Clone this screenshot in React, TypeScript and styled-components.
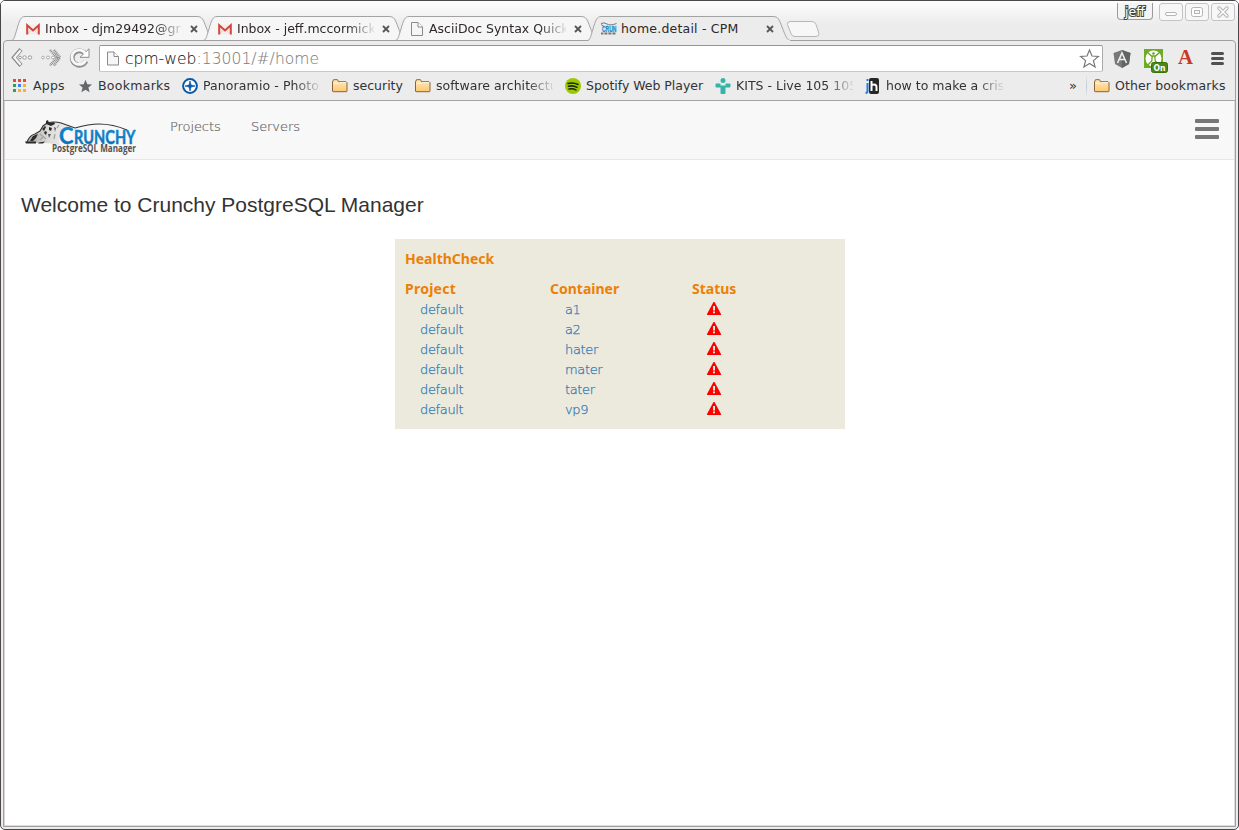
import React from "react";
import styled, { createGlobalStyle } from "styled-components";

const GlobalStyle = createGlobalStyle`
  * { box-sizing: border-box; }
  body { margin: 0; background: #fff; overflow: hidden; }
  svg { display: block; flex: none; overflow: visible; }
`;

const Window = styled.div`
  width: 1239px;
  height: 830px;
  display: flex;
  flex-direction: column;
  border: 1px solid #4a474a;
  border-radius: 5px;
  background: #ececec;
  padding: 0 2px 2px 2px;
  font-family: "DejaVu Sans", sans-serif;
  overflow: hidden;
`;

const TitleBar = styled.header`
  height: 39px;
  flex: none;
  margin: 0 -2px;
  padding: 0 1px 0 10px;
  display: flex;
  justify-content: space-between;
  background: linear-gradient(#fdfdfd, #ececec 60%);
`;

const TabStrip = styled.div`
  display: flex;
  align-items: flex-end;
`;

const TabBox = styled.div<{ $active?: boolean }>`
  position: relative;
  z-index: ${(p) => (p.$active ? 2 : 1)};
  width: 206px;
  height: 25px;
  margin: 0 -14px -1px 0;
  padding: 0 16px 0 14px;
  display: flex;
  align-items: center;
`;

const TabShape = styled.svg`
  position: absolute;
  left: 0;
  top: 0;
`;

const TabIcon = styled.span`
  position: relative;
  display: flex;
  align-items: center;
  width: 16px;
  height: 16px;
  margin: 1px 4px 0 0;
`;

const TabTitle = styled.span<{ $fade?: boolean; $spacing: number }>`
  position: relative;
  width: 137px;
  height: 18px;
  line-height: 18px;
  font-size: 12.5px;
  letter-spacing: ${(p) => p.$spacing}px;
  white-space: nowrap;
  overflow: hidden;
  color: #2e2828;
  mask-image: ${(p) => (p.$fade ? "linear-gradient(90deg,#000 110px,transparent 140px)" : "none")};
`;

const CloseIcon = styled.svg`
  position: relative;
  margin: 1px 0 0 8px;
`;

const NewTab = styled.svg`
  margin: 0 0 3px 7px;
`;

const Controls = styled.div`
  display: flex;
  padding-top: 2px;
`;

const UserBadge = styled.span`
  width: 36px;
  height: 17px;
  margin: 0 6px 0 0;
  border: 1px solid #9b9b9b;
  border-top: 0;
  border-radius: 0 0 4px 4px;
  background: #f4f4f4;
  color: #fff;
  -webkit-text-stroke: 2px #444;
  paint-order: stroke fill;
  font-size: 12.5px;
  line-height: 18px;
  text-align: center;
`;

const ControlButton = styled.span`
  width: 24px;
  height: 18px;
  margin-right: 2px;
  border: 1px solid #c3c3c3;
  border-radius: 3px;
  background: #f7f7f7;
  display: flex;
  align-items: center;
  justify-content: center;
`;

const Frame = styled.main`
  flex: 1;
  display: flex;
  flex-direction: column;
  border: 1px solid #a1a0a1;
  border-radius: 4px 4px 0 0;
  background: #ececec;
`;

const Toolbar = styled.div`
  height: 31px;
  flex: none;
  display: flex;
  align-items: center;
  padding: 3px 8px 0 7px;
`;

const NavIcons = styled.div`
  display: flex;
  width: 88px;
  gap: 7px;
`;

const AddressBar = styled.div`
  width: 1004px;
  height: 27px;
  border: 1px solid #aaa;
  border-top-color: #949494;
  border-bottom-color: #c9c9c9;
  border-radius: 2px;
  background: #fff;
  display: flex;
  align-items: center;
  padding: 0 3px 0 7px;
`;

const Url = styled.span`
  flex: 1;
  margin: 2px 0 0 6px;
  font-size: 15.5px;
  font-weight: 200;
  letter-spacing: 0.05px;
  color: #828282;
  white-space: nowrap;
  line-height: 20px;
  -webkit-text-stroke: 0.1px currentColor;
`;

const Host = styled.span`
  color: #202020;
`;

const Extensions = styled.div`
  display: flex;
  align-items: center;
  width: 112px;
  margin-left: 10px;
`;

const ExtensionSlot = styled.span<{ $width: number }>`
  width: ${(p) => p.$width}px;
`;

const BookmarksBar = styled.div`
  height: 29px;
  flex: none;
  display: flex;
  align-items: center;
  padding: 0 9px 1px 8px;
  border-bottom: 1px solid #a5a5a5;
`;

const Bookmark = styled.span`
  display: flex;
  align-items: center;
  gap: 5px;
  margin-right: 12px;
`;

const BookmarkText = styled.span<{ $width: number; $fade?: boolean; $spacing?: number }>`
  width: ${(p) => p.$width}px;
  height: 18px;
  line-height: 17px;
  font-size: 12.5px;
  letter-spacing: ${(p) => p.$spacing ?? 0}px;
  color: #303335;
  white-space: nowrap;
  overflow: ${(p) => (p.$fade ? "hidden" : "visible")};
  mask-image: ${(p) => (p.$fade ? "linear-gradient(90deg,#000 78%,transparent 102%)" : "none")};
`;

const Chevron = styled.span`
  margin-left: auto;
  width: 17px;
  font-size: 13px;
  line-height: 16px;
  color: #303335;
`;

const Separator = styled.i`
  width: 1px;
  height: 24px;
  margin-right: 7px;
  background: linear-gradient(#ececec, #bfcbd6, #ececec);
`;

const OtherBookmarks = styled(Bookmark)`
  margin-right: 0;
`;

const Page = styled.section`
  flex: 1;
  background: #fff;
  border: solid #dcdcdc;
  border-width: 0 1px 1px;
  border-left-color: #d8d2d2;
  font-family: "Liberation Sans", sans-serif;
`;

const PageNav = styled.nav`
  height: 59px;
  display: flex;
  align-items: flex-start;
  padding: 18px 15px 0 20px;
  background: #f8f8f8;
  border-bottom: 1px solid #e7e7e7;
`;

const NavLinks = styled.div`
  flex: 1;
  display: flex;
  margin-left: 33px;
`;

const NavLink = styled.span<{ $width: number }>`
  width: ${(p) => p.$width}px;
  font-family: "DejaVu Sans", sans-serif;
  font-weight: 200;
  font-size: 13px;
  line-height: 15px;
  letter-spacing: -0.08px;
  color: #666;
  -webkit-text-stroke: 0.2px currentColor;
`;

const Welcome = styled.h1`
  margin: 31px 0 0 16px;
  font-size: 21px;
  font-weight: 400;
  line-height: 28px;
  color: #333;
`;

const HealthPanel = styled.div`
  width: 450px;
  height: 190px;
  margin: 20px 0 0 390px;
  padding: 10px;
  background: #eceadd;
`;

const PanelTitle = styled.h2`
  margin: 0 0 10px;
  font: 700 14px/20px "Noto Sans", sans-serif;
  color: #ec8006;
`;

const HealthGrid = styled.div`
  display: grid;
  grid-template-columns: 145px 142px 1fr;
  grid-auto-rows: 20px;
`;

const ColumnTitle = styled.span<{ $spacing?: number }>`
  font: 700 14px/20px "Noto Sans", sans-serif;
  letter-spacing: ${(p) => p.$spacing ?? 0}px;
  color: #ec8006;
`;

const Cell = styled.span`
  padding: 1px 0 0 15px;
  font: 200 13px/20px "DejaVu Sans", sans-serif;
  letter-spacing: -0.35px;
  color: #337ab7;
  -webkit-text-stroke: 0.25px currentColor;
`;

const StatusCell = styled.span`
  padding: 3px 0 0 15px;
`;

function Gmail() {
  return (
    <svg width="15" height="16" viewBox="-0.500 0 15 16">
      <rect x="1" y="3.500" width="13" height="10" fill="#f2eeee" />
      <path d="M2 12.500L7.500 7.500l5 5" stroke="#d5cfcf" fill="none" />
      <path d="M1.700 13.500V4.300L7.500 9.500l5.800-5.200V13.500" stroke="#d4453a" strokeWidth="2" fill="none" />
    </svg>
  );
}

function PageGlyph({ w = 12, h = 14 }: { w?: number; h?: number }) {
  return (
    <svg width={w} height={h} viewBox="0 0 12 14">
      <path d="M.5.5h6.500L11.500 5v8.500H.5z" fill="#f6f6f6" stroke="#8a8a8a" />
      <path d="M7 .5V5h4.500" fill="#fff" stroke="#8a8a8a" />
    </svg>
  );
}

function Favicon() {
  return (
    <svg width="16" height="14" viewBox="0 0 16 14">
      <path d="M0 1.500Q3 0 6 2T15.500 1.500M0 2.500l3 2" stroke="#777" fill="none" />
      <text x="1" y="9.500" fontFamily="Liberation Sans" fontWeight="700" fontSize="9" textLength="14.500" lengthAdjust="spacingAndGlyphs" fill="#198dcc" stroke="#198dcc" strokeWidth=".3">CRUN</text>
      <path d="M0 11.500h15" stroke="#777" strokeWidth="1.800" strokeDasharray="2 .6 1 .4" />
    </svg>
  );
}

function Folder() {
  return (
    <svg width="16" height="16" viewBox="0 0 16 16">
      <defs>
        <linearGradient id="folder" x2="0" y2="1">
          <stop stopColor="#ffecc0" />
          <stop offset="1" stopColor="#fcc871" />
        </linearGradient>
      </defs>
      <path d="M.5 13V4l1-2.300h4l1 2h7.500l1 1V13q0 .7-.7.700H1.200Q.5 13.700.5 13z" fill="url(#folder)" stroke="#8c6238" />
      <path d="M1.500 5.500h5l1-1H14" stroke="#fff3d6" fill="none" />
    </svg>
  );
}

function Logo() {
  return (
    <svg width="112" height="37" viewBox="0 0 112 37">
      <defs>
        <linearGradient id="hide" x2="1">
          <stop stopColor="#a9a6a4" />
          <stop offset=".45" stopColor="#dddcdb" />
          <stop offset="1" stopColor="#f8f8f8" />
        </linearGradient>
        <linearGradient id="logoBlue" x2="0" y2="1">
          <stop stopColor="#1390d4" />
          <stop offset="1" stopColor="#0869b2" />
        </linearGradient>
      </defs>
      <path d="M2 23l5-6 8-4 3-6 4-3 5 0 8-1 9 2 7 4-9 2-6 5-2 5 2 6-7-2-8-1H4z" fill="url(#hide)" />
      <path d="M2 23q3-7 8-8l5-3 3-5 4-3q7-2 14 0l14 5q14-4 24-4 14 0 28 6" fill="none" stroke="#343230" strokeWidth="1.100" />
      <path d="M21 5V2l2-1 1 3 5-1 1 2-4 2zM17 10l3-3 1 1-2 4zM8 17l5-2-2 4-3 3H5zM20 12l2 1-1 3-2-2zM24 8l3 1-1 3-2-1zM0 22.500h11v2H1zM14 23.500l6-1-2 2h-5z" fill="#2c2a29" />
      <path d="M23 15l3 0-2 4zM29 8l2 1-1 4z" fill="#5a5856" />
      <path d="M15 15l6 5M30 15l-1 5M34 6l-2 3M18 18l-3 3" stroke="#a5a3a1" strokeWidth="1.300" />
      <g fontFamily="Lato, sans-serif" fontWeight="700" fill="url(#logoBlue)">
        <text x="34" y="25" fontSize="22" stroke="#1280c7" strokeWidth=".4" textLength="14.500" lengthAdjust="spacingAndGlyphs">C</text>
        <text x="49" y="25" fontSize="18" stroke="#1280c7" strokeWidth=".5" textLength="61.500" lengthAdjust="spacingAndGlyphs">RUNCHY</text>
      </g>
      <text x="27" y="32.500" fontFamily="Open Sans, sans-serif" fontSize="10" fontWeight="700" fill="#56524f" textLength="84" lengthAdjust="spacingAndGlyphs">PostgreSQL Manager</text>
    </svg>
  );
}

function Tab({ title, icon, active, fade = true, spacing = 0 }: { title: string; icon: React.ReactNode; active?: boolean; fade?: boolean; spacing?: number }) {
  return (
    <TabBox $active={active}>
      <TabShape width="206" height="26">
        <path
          d="M0 24.500C3 24.500 3.500 21 6 13C8.500 4 10 .5 14 .5H186C191 .5 192 3 195 11C199 21 200 24.500 204 24.500"
          fill={active ? "#ececec" : "#f6f6f6"}
          stroke="#a3a3a3"
        />
        {active ? <path d="M2 25h201" stroke="#ececec" strokeWidth="2" /> : <path d="M0 24.500h206" stroke="#a1a0a1" />}
      </TabShape>
      <TabIcon>{icon}</TabIcon>
      <TabTitle $fade={fade} $spacing={spacing}>{title}</TabTitle>
      <CloseIcon width="8" height="8" viewBox="0 0 8 8">
        <path d="M1 1l6 6M7 1L1 7" stroke="#555" strokeWidth="1.800" />
      </CloseIcon>
    </TabBox>
  );
}

function Warning() {
  return (
    <svg width="14" height="14" viewBox="0 0 14 14">
      <path d="M6.500 0h1L14 12v1H0v-1z" fill="#f00" />
      <path d="M6 4h2v4.500H6zM6 9.500h2v1.700H6z" fill="#eceadd" />
    </svg>
  );
}

const starPath = "M8 .8l2.100 5.100 5.400.4-4.200 3.500 1.400 5.300L8 12.200l-4.700 2.900 1.400-5.300L.5 6.300l5.400-.4z";
const containers = ["a1", "a2", "hater", "mater", "tater", "vp9"];

export default function App() {
  return (
    <Window>
      <GlobalStyle />
      <TitleBar>
        <TabStrip>
          <Tab title="Inbox - djm29492@gr" icon={<Gmail />} />
          <Tab title="Inbox - jeff.mccormick@" icon={<Gmail />} />
          <Tab title="AsciiDoc Syntax Quick Ref" icon={<svg width="16" height="14"><g transform="translate(2 0)"><PageGlyph /></g></svg>} />
          <Tab title="home.detail - CPM" icon={<Favicon />} active fade={false} spacing={0.2} />
          <NewTab width="34" height="16">
            <path d="M4 .5h22q3 0 4 3l3 9q0 3-3 3H9q-3 0-4-3L1.500 3.500Q1 .5 4 .5z" fill="#f7f7f7" stroke="#b6b6b6" />
          </NewTab>
        </TabStrip>
        <Controls>
          <UserBadge>jeff</UserBadge>
          <ControlButton><svg width="12" height="10"><rect x=".5" y="5.500" width="11" height="3" rx="1.500" fill="#fff" stroke="#b5b5b5" /></svg></ControlButton>
          <ControlButton><svg width="12" height="10"><rect x=".5" y=".5" width="11" height="9" rx="2" fill="#fff" stroke="#b5b5b5" /><rect x="3.500" y="3.500" width="5" height="3" fill="#f7f7f7" stroke="#b5b5b5" /></svg></ControlButton>
          <ControlButton><svg width="12" height="10"><path d="M2 1l8 8M10 1L2 9" stroke="#b0b0b0" strokeWidth="3.500" strokeLinecap="round" /><path d="M2 1l8 8M10 1L2 9" stroke="#fff" strokeWidth="1.600" strokeLinecap="round" /></svg></ControlButton>
        </Controls>
      </TitleBar>
      <Frame>
        <Toolbar>
          <NavIcons>
            <svg width="22" height="20">
              <path d="M10 1.500L3 9.500l7 8" fill="none" stroke="#8c8c8c" strokeWidth="4.200" />
              <path d="M9.700 2.300L3.400 9.500l6.300 7.200" fill="none" stroke="#f5f5f5" strokeWidth="2.200" />
              <g fill="#fff" stroke="#999"><circle cx="9" cy="9.500" r="1.300" /><circle cx="13.500" cy="9.500" r="1.700" /><circle cx="19" cy="9.500" r="1.700" /></g>
            </svg>
            <svg width="22" height="20">
              <path d="M10 2l7 7.500-7 8M14 2l6 7.500-6 8" fill="none" stroke="#8a8a8a" strokeWidth="2.500" strokeDasharray="1 .7" />
              <g fill="#fff" stroke="#aaa"><circle cx="3" cy="9.500" r="1.300" /><circle cx="8" cy="9.500" r="1.500" /><circle cx="13" cy="9.500" r="1.500" /></g>
            </svg>
            <svg width="22" height="20">
              <path d="M16 5.500A7.200 7.200 0 1 0 17 13" fill="none" stroke="#8d8d8d" strokeWidth="4.800" />
              <path d="M20 .8v8.500h-9z" fill="#fff" stroke="#8d8d8d" />
              <path d="M16.500 6A7.200 7.200 0 1 0 16.500 12.500" fill="none" stroke="#f7f7f7" strokeWidth="2.800" />
            </svg>
          </NavIcons>
          <AddressBar>
            <PageGlyph w={12} h={15} />
            <Url><Host>cpm-web</Host>:13001/#/home</Url>
            <svg width="19" height="19" viewBox="0 0 16 16"><path d={starPath} fill="#fff" stroke="#777" /></svg>
          </AddressBar>
          <Extensions>
            <ExtensionSlot $width={31}>
              <svg width="18" height="19" viewBox="0 0 18 19"><path d="M9 1l8.500 3-1.500 11-7 4-7-4L.5 4z" fill="#77787a" /><path d="M9 1l8.500 3-1.500 11-7 4z" fill="#626365" /><path d="M4.500 14L9 4l4.500 10M6.500 10.500h5" fill="none" stroke="#eee" strokeWidth="1.600" /></svg>
            </ExtensionSlot>
            <ExtensionSlot $width={34}>
              <svg width="24" height="19" viewBox="0 0 24 19">
                <path d="M0 0h19v19H0z" fill="#6dac24" />
                <circle cx="9.500" cy="9.500" r="8" fill="#fff" />
                <path d="M3.500 3.500l4 3.500h4l4-3.500M8.200 7l-.4 5-4 4M10.800 7l.4 5 4 4" stroke="#67a520" strokeWidth="1.300" fill="none" />
                <circle cx="9.500" cy="4.500" r="1.300" fill="#67a520" />
                <rect x="7.500" y="13.500" width="16" height="10" rx="2" fill="#4c8518" stroke="#38720d" />
                <text x="9.500" y="22" fontFamily="DejaVu Sans" fontSize="9" fontWeight="700" fill="#fff" textLength="12" lengthAdjust="spacingAndGlyphs">On</text>
              </svg>
            </ExtensionSlot>
            <ExtensionSlot $width={33}>
              <svg width="16" height="18"><text x="0" y="15" fontFamily="Liberation Serif" fontWeight="700" fontSize="20" textLength="15" lengthAdjust="spacingAndGlyphs" fill="#c63a27">A</text></svg>
            </ExtensionSlot>
            <svg width="14" height="14"><path d="M1.500 2.500h10M1.500 7.500h10M1.500 12.500h10" stroke="#505050" strokeWidth="3" strokeLinecap="round" /></svg>
          </Extensions>
        </Toolbar>
        <BookmarksBar>
          <Bookmark>
            <svg width="16" height="16">
              {["#e6483b", "#e6483b", "#e6483b", "#2ca257", "#3c81f4", "#f4b32c", "#2ca257", "#f4b32c", "#f4b32c"].map((c, i) => (
                <rect key={i} x={1 + (i % 3) * 5} y={1 + Math.floor(i / 3) * 5} width="3" height="3" fill={c} />
              ))}
            </svg>
            <BookmarkText $width={33} $spacing={0.2}>Apps</BookmarkText>
          </Bookmark>
          <Bookmark><svg width="15" height="14" viewBox="0.500 0 15 16"><path d={starPath} fill="#65686a" /></svg><BookmarkText $width={72} $spacing={0.28}>Bookmarks</BookmarkText></Bookmark>
          <Bookmark>
            <svg width="16" height="16"><circle cx="8" cy="8" r="6.900" fill="#fff" stroke="#0758a5" strokeWidth="2" /><path d="M8 3l1 4 4 1-4 1-1 4-1-4-4-1 4-1z" fill="#0758a5" stroke="#0758a5" strokeWidth=".7" /></svg>
            <BookmarkText $width={117} $fade $spacing={0.1}>Panoramio - Photos</BookmarkText>
          </Bookmark>
          <Bookmark><Folder /><BookmarkText $width={50}>security</BookmarkText></Bookmark>
          <Bookmark><Folder /><BookmarkText $width={117} $fade $spacing={0.05}>software architecture</BookmarkText></Bookmark>
          <Bookmark>
            <svg width="16" height="16"><circle cx="8" cy="8" r="8" fill="#9ac900" /><path d="M3 5.500q5-1.500 10 1M3.500 8.300q4.500-1.200 8.500 1M4 11q4-1 7 1" stroke="#1d2408" strokeWidth="1.500" fill="none" strokeLinecap="round" /></svg>
            <BookmarkText $width={117} $spacing={-0.03}>Spotify Web Player</BookmarkText>
          </Bookmark>
          <Bookmark>
            <svg width="16" height="16"><circle cx="8" cy="2.500" r="2.500" fill="#36b4a8" /><path d="M1.500 5.500h4v2h5v-2h4q1 0 1 1v2q0 1-1 1h-4v5.500q0 1-1 1h-3q-1 0-1-1V9.500h-4q-1 0-1-1v-2q0-1 1-1z" fill="#36b4a8" /></svg>
            <BookmarkText $width={117} $fade>KITS - Live 105 105.3</BookmarkText>
          </Bookmark>
          <Bookmark>
            <svg width="16" height="16"><path d="M2.500 5v8q0 2-2 2M2.500 1v2" stroke="#237be2" strokeWidth="2" fill="none" /><rect x="4" y="0" width="10" height="16" rx="2" fill="#262626" /><path d="M6.500 3v10M6.500 8q0-1.500 2.500-1.500T11.500 9v4" stroke="#fff" strokeWidth="2" fill="none" /></svg>
            <BookmarkText $width={117} $fade>how to make a crisp</BookmarkText>
          </Bookmark>
          <Chevron>»</Chevron>
          <Separator />
          <OtherBookmarks><Folder /><BookmarkText $width={111} $spacing={0.13}>Other bookmarks</BookmarkText></OtherBookmarks>
        </BookmarksBar>
        <Page>
          <PageNav>
            <Logo />
            <NavLinks>
              <NavLink $width={81}>Projects</NavLink>
              <NavLink $width={60}>Servers</NavLink>
            </NavLinks>
            <svg width="24" height="20">
              <rect y="0" width="24" height="4" rx="1" fill="#777" />
              <rect y="8" width="24" height="4" rx="1" fill="#777" />
              <rect y="16" width="24" height="4" rx="1" fill="#777" />
            </svg>
          </PageNav>
          <Welcome>Welcome to Crunchy PostgreSQL Manager</Welcome>
          <HealthPanel>
            <PanelTitle>HealthCheck</PanelTitle>
            <HealthGrid>
              <ColumnTitle $spacing={0.25}>Project</ColumnTitle>
              <ColumnTitle>Container</ColumnTitle>
              <ColumnTitle>Status</ColumnTitle>
              {containers.map((name) => (
                <React.Fragment key={name}>
                  <Cell>default</Cell>
                  <Cell>{name}</Cell>
                  <StatusCell><Warning /></StatusCell>
                </React.Fragment>
              ))}
            </HealthGrid>
          </HealthPanel>
        </Page>
      </Frame>
    </Window>
  );
}
